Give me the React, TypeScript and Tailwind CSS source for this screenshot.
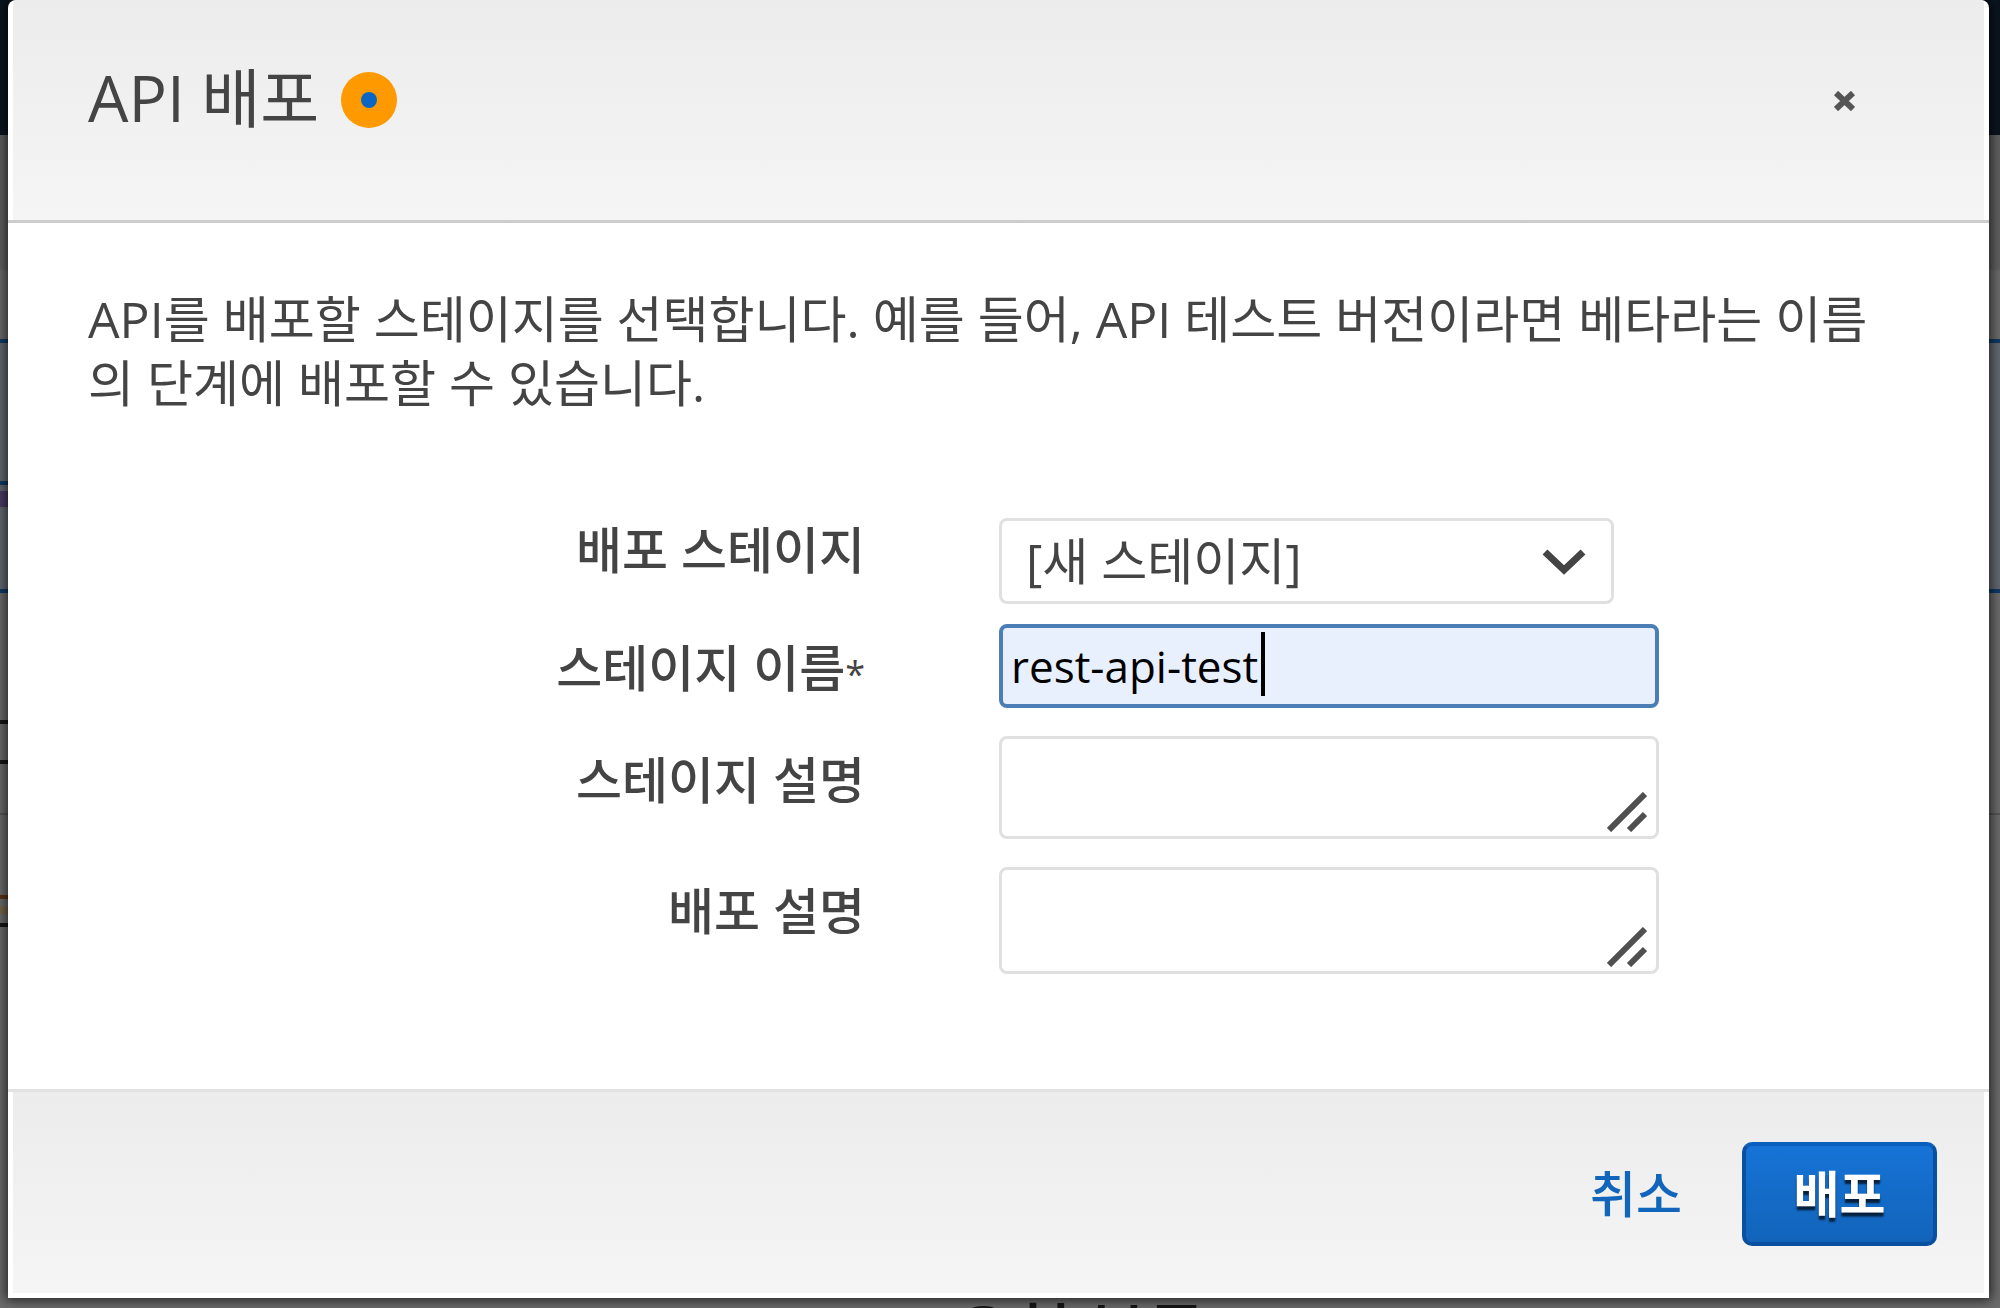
import React, { useState } from "react";

const FONT = "font-['Open_Sans','Noto_Sans_CJK_KR',sans-serif]";

function Backdrop() {
	return (
		<div aria-hidden="true" className="absolute inset-0 flex flex-col overflow-hidden bg-[#6b6b6b]">
			<div className="h-[135px] shrink-0 bg-[#0b141e]" />
			<div className="h-[134px] shrink-0 bg-[#606060]" />
			<div className="h-[70px] shrink-0 border-t-2 border-[#656565]" />
			<div className="h-[254px] shrink-0 border-y-4 border-[#0f3a66] bg-[#636870]" />
			<div className="h-[222px] shrink-0 border-b-2 border-[#555555]" />
			<p className="mt-[471px] pl-[160px] text-center text-[64px] leading-[92px] font-medium text-[#161616]">요청 본문</p>
			<div className="absolute left-0 top-[481px] h-1 w-2 bg-[#0f3a66]" />
			<div className="absolute left-0 top-[491px] h-4 w-2 bg-[#4b3a66]" />
			<div className="absolute left-0 top-[720px] h-1 w-2 bg-[#161616]" />
			<div className="absolute left-0 top-[760px] h-1 w-2 bg-[#161616]" />
			<div className="absolute left-0 top-[895px] h-1 w-2 bg-[#5c3312]" />
			<div className="absolute left-0 top-[906px] h-2 w-2 bg-[#75664a]" />
			<div className="absolute left-0 top-[923px] h-1 w-2 bg-[#161616]" />
		</div>
	);
}

function FormRow({ id, label, required, className, children }: { id: string, label: string, required?: boolean, className: string, children: React.ReactNode }) {
	return (
		<div className="flex items-start gap-[134px]">
			<label htmlFor={ id } className={ `w-[777px] shrink-0 text-right leading-[64px] font-medium ${ className }` }>
				{ label }
				{ required && <span className="text-[36px] leading-none font-normal">*</span> }
			</label>
			{ children }
		</div>
	);
}

function DescriptionArea({ id, className }: { id: string, className: string }) {
	const [value, setValue] = useState("");

	return (
		<div className="relative w-[660px]">
			<textarea id={ id } name={ id } value={ value } onChange={ e => setValue(e.target.value) } className={ `block w-full resize-none rounded-lg border-[3px] border-[#e0e0e0] bg-white px-2 outline-none ${ className }` } />
			<svg viewBox="0 0 40 40" className="pointer-events-none absolute right-3 bottom-[7px] size-10" stroke="#505050" strokeWidth="6" fill="none">
				<path d="M2 38L38 2M22 38L38 22" />
			</svg>
		</div>
	);
}

function App() {
	const [stage, setStage] = useState("new");
	const [stageName, setStageName] = useState("rest-api-test");

	return (
		<div lang="ko" className={ `relative min-h-screen overflow-hidden text-[#444444] ${ FONT }` }>
			<Backdrop />
			<div role="dialog" aria-labelledby="dialog-title" className="relative mr-[11px] ml-2 rounded-t-lg bg-white text-[50px] shadow-[0_0_12px_2px_rgba(0,0,0,0.7)]">
				<header className="border-b-[3px] border-[#cccccc]">
					<div className="mx-[5px] flex items-start justify-between rounded-t bg-linear-to-b from-[#ececec] to-[#f5f5f5] pt-[56px] pr-[129px] pb-[76px] pl-[75px]">
						<div className="flex items-center gap-[22px]">
							<h1 id="dialog-title" className="pb-1 text-[64px] leading-[84px] font-normal">API 배포</h1>
							<span className="flex size-14 items-center justify-center rounded-full bg-[#ff9900]">
								<span className="size-4 rounded-full bg-[#0a66c2]" />
							</span>
						</div>
						<button type="button" aria-label="닫기" className="mt-[35px]">
							<svg viewBox="0 0 21 20" className="h-5 w-[21px]" stroke="#555555" strokeWidth="6" fill="none">
								<path d="M2 2L19 18M19 2L2 18" />
							</svg>
						</button>
					</div>
				</header>

				<main className="pt-[64px] pr-[100px] pb-[115px] pl-20">
					<p className="leading-[64px]">
						API를 배포할 스테이지를 선택합니다. 예를 들어, API 테스트 버전이라면 베타라는 이름의 단계에 배포할 수 있습니다.
					</p>

					<form id="deploy-form" onSubmit={ e => e.preventDefault() } className="mt-[103px]">
						<FormRow id="stage" label="배포 스테이지" className="">
							<div className="relative w-[615px]">
								<select id="stage" name="stage" value={ stage } onChange={ e => setStage(e.target.value) } className="block h-[86px] w-full appearance-none rounded-lg border-[3px] border-[#e0e0e0] bg-white pl-6 outline-none">
									<option value="new">[새 스테이지]</option>
								</select>
								<svg viewBox="0 0 44 26" className="pointer-events-none absolute top-[31px] right-7 h-[26px] w-11" stroke="#444444" strokeWidth="7" fill="none">
									<path d="M3 3L22 21L41 3" />
								</svg>
							</div>
						</FormRow>
						<div className="mt-5">
							<FormRow id="stage-name" label="스테이지 이름" required className="pt-3">
								<div className="relative w-[660px]">
									<input type="text" id="stage-name" name="stage-name" value={ stageName } onChange={ e => setStageName(e.target.value) } className="block h-[84px] w-full rounded-lg border-4 border-[#4a7eb5] bg-[#e8f0fe] px-2 text-[44px] text-black caret-transparent outline-none" />
									<span className="pointer-events-none absolute top-2 left-[262px] h-16 w-1 bg-black" />
								</div>
							</FormRow>
						</div>
						<div className="mt-7">
							<FormRow id="stage-description" label="스테이지 설명" className="pt-3">
								<DescriptionArea id="stage-description" className="h-[103px]" />
							</FormRow>
						</div>
						<div className="mt-7">
							<FormRow id="deploy-description" label="배포 설명" className="pt-3">
								<DescriptionArea id="deploy-description" className="h-[107px]" />
							</FormRow>
						</div>
					</form>
				</main>

				<footer className="border-t-[3px] border-[#e2e2e2] pb-[5px]">
					<div className="mx-[5px] flex items-center justify-end gap-[60px] bg-linear-to-b from-[#ececec] to-[#f5f5f5] pt-[50px] pr-[47px] pb-[47px]">
						<button type="button" className="leading-[64px] font-medium text-[#1166bb]">취소</button>
						<button type="submit" form="deploy-form" className="h-[104px] w-[195px] rounded-[10px] border-4 border-[#0a50a0] border-t-[#0a5fbe] bg-linear-to-b from-[#1673d6] to-[#1264ba] font-bold text-white [text-shadow:0_4px_2px_rgba(0,0,0,0.7)]">배포</button>
					</div>
				</footer>
			</div>
		</div>
	);
}

export default App;
